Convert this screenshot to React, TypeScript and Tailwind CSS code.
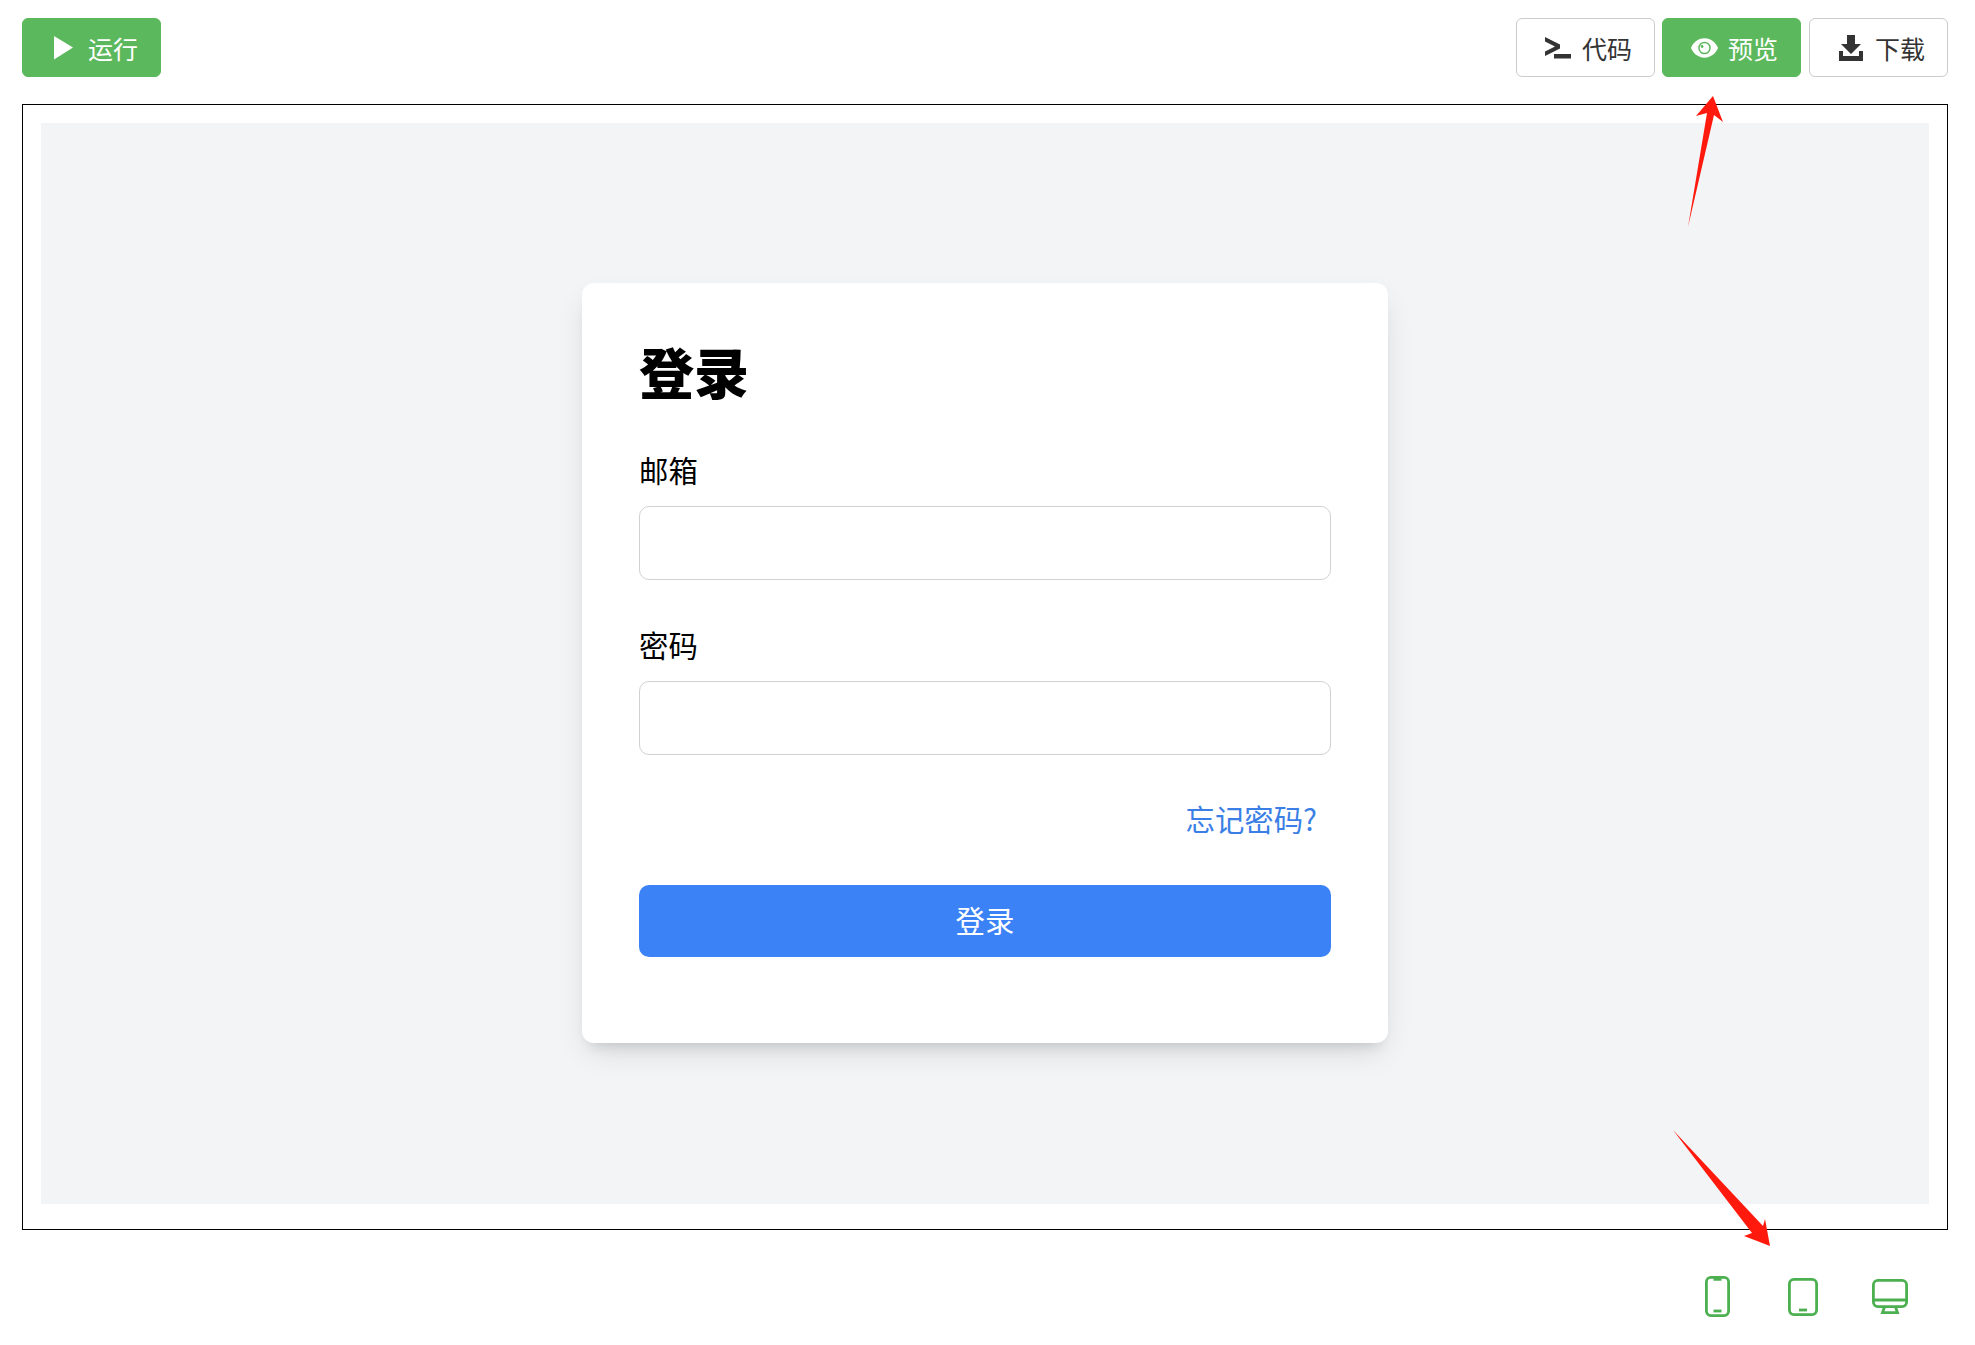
const font = { fontFamily: '"Noto Sans CJK SC", sans-serif' };

function ToolButton({ active, icon, label }: { active?: boolean; icon: React.ReactNode; label: string }) {
  return (
    <button
      className={
        "flex h-[59px] w-[139px] items-center rounded-[6px] border pl-[26px] text-[25px] leading-none " +
        (active ? "border-[#5cb85c] bg-[#5cb85c] text-white" : "border-[#ccc] bg-white text-[#333]")
      }
    >
      <span className="flex w-[30px] justify-center">{icon}</span>
      <span className="ml-[9px] pt-[2px]">{label}</span>
    </button>
  );
}

function PlayIcon() {
  return (
    <svg width="20" height="24" viewBox="0 0 20 24" fill="currentColor">
      <path d="M0 0 L19 11.5 L0 23.5 Z" />
    </svg>
  );
}

function TerminalIcon() {
  return (
    <svg width="26" height="22" viewBox="0 0 26 22" fill="#333">
      <path d="M0 0 L15 7.5 V11.5 L0 19 V14.5 L10 9.5 L0 4.5 Z" />
      <rect x="9" y="17" width="17" height="4.5" />
    </svg>
  );
}

function EyeIcon() {
  return (
    <svg width="27" height="20" viewBox="0 0 28 20" fill="currentColor">
      <path
        fillRule="evenodd"
        d="M14 0 C21 0 26 5 28 10 C26 15 21 20 14 20 C7 20 2 15 0 10 C2 5 7 0 14 0 Z M14 3.5 A6.5 6.5 0 1 0 14 16.5 A6.5 6.5 0 1 0 14 3.5 Z"
      />
      <path
        fillRule="evenodd"
        d="M14 5 A5 5 0 1 1 14 15 A5 5 0 1 1 14 5 Z M11.5 7 A1.5 1.5 0 1 0 11.5 10 A1.5 1.5 0 1 0 11.5 7 Z"
      />
    </svg>
  );
}

function DownloadIcon() {
  return (
    <svg width="24" height="26" viewBox="0 0 24 26" fill="#333">
      <path d="M8 0 H16 V9 H22 L12 19 L2 9 H8 Z" />
      <path d="M0 16 H4 V21 H20 V16 H24 V26 H0 Z" />
    </svg>
  );
}

function PhoneIcon() {
  return (
    <svg width="25" height="41" viewBox="0 0 25 41" fill="none" stroke="#4caf50" strokeWidth="2.8">
      <rect x="1.4" y="1.4" width="22.2" height="38.2" rx="4.5" />
      <path d="M8.5 3 H16.5" strokeWidth="3.5" />
      <path d="M8.5 35 H16.5" />
    </svg>
  );
}

function TabletIcon() {
  return (
    <svg width="30" height="38" viewBox="0 0 30 38" fill="none" stroke="#4caf50" strokeWidth="2.8">
      <rect x="1.4" y="1.4" width="27.2" height="35.2" rx="4.5" />
      <path d="M11 32 H19" />
    </svg>
  );
}

function MonitorIcon() {
  return (
    <svg width="36" height="35" viewBox="0 0 36 35" fill="none" stroke="#4caf50" strokeWidth="2.8">
      <rect x="1.4" y="1.4" width="33.2" height="26.2" rx="4.5" />
      <path d="M1.4 21 H34.6" />
      <path d="M12.5 28 L10.5 33.6 H25.5 L23.5 28" />
    </svg>
  );
}

function Field({ label }: { label: string }) {
  return (
    <div>
      <label className="block text-[29.4px] leading-[42px] text-black">{label}</label>
      <input className="mt-[16px] block h-[74px] w-full rounded-[10px] border border-[#d1d1d1] bg-white" />
    </div>
  );
}

export default function App() {
  return (
    <div className="relative h-[1345px] w-[1975px] overflow-hidden bg-white" style={font}>
      <div className="flex justify-between pl-[22px] pr-[27px] pt-[18px]">
        <ToolButton active icon={<PlayIcon />} label="运行" />
        <div className="flex gap-[7px]">
          <ToolButton icon={<TerminalIcon />} label="代码" />
          <ToolButton active icon={<EyeIcon />} label="预览" />
          <div className="ml-[1px]">
            <ToolButton icon={<DownloadIcon />} label="下载" />
          </div>
        </div>
      </div>

      <div className="ml-[22px] mt-[27px] h-[1126px] w-[1926px] border border-black px-[18px] pb-[25px] pt-[18px]">
        <div className="flex h-full items-center justify-center bg-[#f3f4f6] pb-[2px]">
          <div className="h-[760px] w-[806px] rounded-[12px] bg-white px-[57px] pt-[47px] shadow-[0_13px_31px_-6px_rgba(0,0,0,0.13),0_10px_13px_-8px_rgba(0,0,0,0.12)]">
            <h1 className="text-[55px] font-black leading-[80px] text-black">登录</h1>
            <div className="mt-[38px]">
              <Field label="邮箱" />
            </div>
            <div className="mt-[43px]">
              <Field label="密码" />
            </div>
            <div className="mt-[42px] flex justify-end pr-[14px]">
              <a className="text-[29.4px] leading-[42px] text-[#3b7fe6]">忘记密码?</a>
            </div>
            <button className="mt-[46px] block h-[72px] w-full rounded-[10px] bg-[#3b82f6] pb-[2px] text-[29.4px] text-white">登录</button>
          </div>
        </div>
      </div>

      <div className="mt-[46px] flex items-center justify-end pr-[67px]">
        <PhoneIcon />
        <div className="ml-[58px]"><TabletIcon /></div>
        <div className="ml-[54px]"><MonitorIcon /></div>
      </div>

      <svg className="absolute left-[1680px] top-[90px]" width="60" height="145" viewBox="1680 90 60 145" fill="#ff1a0d">
        <path d="M1713 96 L1723 122 L1714 115 L1688 227 L1707 113 L1696 116 Z" />
      </svg>
      <svg className="absolute left-[1665px] top-[1125px]" width="115" height="130" viewBox="1665 1125 115 130" fill="#ff1a0d">
        <path d="M1673 1130 L1763 1226 L1765 1219 L1770 1246 L1744 1236 L1752 1233 Z" />
      </svg>
    </div>
  );
}
